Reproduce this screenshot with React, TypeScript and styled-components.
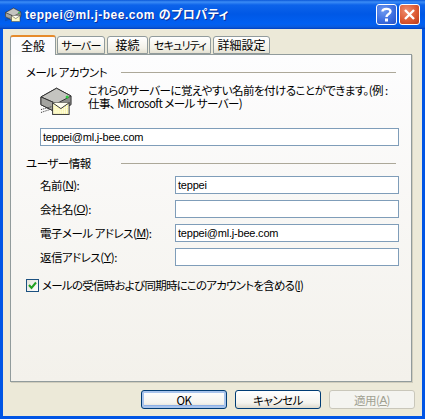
import styled, { createGlobalStyle } from "styled-components";

const GlobalStyle = createGlobalStyle`
  html, body {
    margin: 0;
    padding: 0;
    background: #ece9d8;
  }
`;

const Dialog = styled.div`
  width: 425px;
  height: 419px;
  box-sizing: border-box;
  display: flex;
  flex-direction: column;
  overflow: hidden;
  font-family: "Noto Sans CJK JP", "Liberation Sans", sans-serif;
  font-feature-settings: "palt";
  font-size: 11.5px;
  letter-spacing: -0.5px;
  line-height: 14px;
  color: #000;
  background: #0055e5;
`;

const TitleBar = styled.div`
  height: 29px;
  flex: none;
  box-sizing: border-box;
  padding: 0 5px 0 5px;
  display: flex;
  align-items: center;
  background: linear-gradient(
    180deg,
    #0a57d8 0,
    #3b8cf6 2px,
    #0d63ea 5px,
    #0058e6 14px,
    #0160f2 24px,
    #0a5bde 27px,
    #003fc0 29px
  );
`;

const TitleIcon = styled.div`
  margin-right: 3px;
  display: flex;
`;

const TitleText = styled.div`
  flex: 1;
  font-family: "Liberation Sans", "Noto Sans CJK JP", sans-serif;
  font-size: 12px;
  font-weight: 700;
  letter-spacing: 0.5px;
  color: #fff;
  text-shadow: 1px 1px 0 #0f2f9a;
  white-space: nowrap;
`;

const CaptionButton = styled.div<{ $tone: "help" | "close" }>`
  width: 21px;
  height: 21px;
  margin-left: 2px;
  box-sizing: border-box;
  border: 1px solid #fff;
  border-radius: 3px;
  display: flex;
  align-items: center;
  justify-content: center;
  background: ${(p) =>
    p.$tone === "close"
      ? "radial-gradient(circle at 35% 30%, #ef8e70 0, #dd5a33 55%, #b93a1a 100%)"
      : "radial-gradient(circle at 35% 30%, #6f9af0 0, #3d6fe0 55%, #2450c4 100%)"};
`;

const Body = styled.div`
  flex: 1;
  margin: 0 3px 3px 3px;
  box-sizing: border-box;
  padding: 5px 10px 0 7px;
  display: flex;
  flex-direction: column;
  background: #ece9d8;
`;

const TabStrip = styled.div`
  height: 20px;
  flex: none;
  display: flex;
  align-items: flex-end;
  position: relative;
  z-index: 1;
`;

const Tab = styled.div<{ $active?: boolean; $width: number; $gap?: number; $kana?: boolean }>`
  width: ${(p) => p.$width}px;
  margin-right: ${(p) => p.$gap ?? 1}px;
  height: ${(p) => (p.$active ? 20 : 18)}px;
  margin-bottom: ${(p) => (p.$active ? -1 : 0)}px;
  box-sizing: border-box;
  display: flex;
  align-items: center;
  justify-content: center;
  font-size: ${(p) => (p.$kana ? 11 : 12)}px;
  letter-spacing: ${(p) => (p.$kana ? -0.8 : 0)}px;
  border: 1px solid #919b9c;
  border-bottom: ${(p) => (p.$active ? "none" : "1px solid #919b9c")};
  border-top: ${(p) => (p.$active ? "2px solid #e68b2c" : "1px solid #919b9c")};
  border-radius: 3px 3px 0 0;
  background: ${(p) =>
    p.$active ? "#fcfcfe" : "linear-gradient(180deg, #ffffff 0%, #f3f1e8 70%, #e4e1d2 100%)"};
  white-space: nowrap;
`;

const Panel = styled.div`
  width: 402px;
  height: 328px;
  flex: none;
  box-sizing: border-box;
  border: 1px solid #919b9c;
  box-shadow: 1px 1px 0 #d0cdbd;
  padding: 10px 15px 0 15px;
  background: linear-gradient(180deg, #fdfdfe 0%, #f3f1eb 100%);
`;

const GroupHeader = styled.div<{ $top?: number }>`
  display: grid;
  grid-template-columns: 95px 1fr;
  align-items: center;
  height: 14px;
  margin-top: ${(p) => p.$top ?? 0}px;
  white-space: nowrap;
  &::after {
    content: "";
    height: 1px;
    background: #aca899;
  }
`;

const AccountRow = styled.div`
  display: flex;
  gap: 15px;
  height: 30px;
  margin: 7px 0 0 14px;
`;

const AccountIcon = styled.div`
  flex: none;
`;

const IntroText = styled.div`
  margin-top: -2px;
  line-height: 13px;
  white-space: nowrap;
  letter-spacing: -0.55px;
`;

const Field = styled.div<{ $width: number }>`
  width: ${(p) => p.$width}px;
  height: 18px;
  box-sizing: border-box;
  border: 1px solid #7f9db9;
  background: #fff;
  padding: 1px 2px;
  font-family: "Liberation Sans", sans-serif;
  font-size: 11px;
  letter-spacing: -0.2px;
  line-height: 15px;
  white-space: nowrap;
`;

const NameField = styled(Field)`
  margin: 12px 0 0 14px;
`;

const FormGrid = styled.div`
  display: grid;
  grid-template-columns: 135px 224px;
  row-gap: 6px;
  margin: 6px 0 0 14px;
`;

const RowLabel = styled.div`
  display: flex;
  align-items: center;
  white-space: pre;
  u {
    font-family: "Liberation Sans", sans-serif;
  }
`;

const CheckRow = styled.div`
  display: flex;
  align-items: center;
  gap: 3px;
  margin-top: 12px;
  white-space: nowrap;
  letter-spacing: -0.75px;
`;

const CheckBox = styled.div`
  width: 13px;
  height: 13px;
  box-sizing: border-box;
  border: 1px solid #1c5180;
  background: linear-gradient(135deg, #e4e3dc, #fff);
  display: flex;
  align-items: center;
  justify-content: center;
`;

const Footer = styled.div`
  display: flex;
  justify-content: flex-end;
  gap: 8px;
  margin: 8px -3px 0 0;
`;

const Button = styled.div<{ $variant?: "default" | "disabled" }>`
  width: 86px;
  height: 19px;
  box-sizing: border-box;
  display: flex;
  align-items: center;
  justify-content: center;
  border-radius: 3px;
  border: 1px solid ${(p) => (p.$variant === "disabled" ? "#c9c7ba" : "#003c74")};
  color: ${(p) => (p.$variant === "disabled" ? "#a1a192" : "#000")};
  background: ${(p) =>
    p.$variant === "disabled" ? "#f4f4f0" : "linear-gradient(180deg, #ffffff 0%, #f4f3ee 70%, #dcd8cc 100%)"};
  box-shadow: ${(p) =>
    p.$variant === "default" ? "inset 0 0 0 2px #a9c4ec, inset 0 -1px 0 2px #8db0e6" : "none"};
  u {
    font-family: "Liberation Sans", sans-serif;
  }
`;

const MailServerIcon = ({ size, id }: { size: number; id: string }) => (
  <svg width={size} height={size * 0.9} viewBox="0 0 34 30" style={{ display: "block" }}>
    <defs>
      <pattern id={id} width="2" height="2" patternUnits="userSpaceOnUse">
        <rect width="2" height="2" fill="#fffff0" />
        <rect width="1" height="1" fill="#f5e94a" />
      </pattern>
    </defs>
    <path d="M1 11 L17 2 L32 10 L32 19 L17 27 L1 19 Z" fill="#8c8c8a" stroke="#333" />
    <path d="M1 11 L17 2 L32 10 L17 18 Z" fill="#c4c4c0" stroke="#333" />
    <path d="M1 11 L17 18 L17 27 L1 19 Z" fill="#a4a4a0" stroke="#333" />
    <circle cx="28" cy="11" r="1.6" fill="#2ecc40" />
    <path d="M1 24 L12 21 M1 27 L10 24" stroke="#222" strokeDasharray="1 1" />
    <rect x="13" y="17" width="17" height="12" fill={`url(#${id})`} stroke="#333" />
    <path d="M13 17 L21.5 23 L30 17" fill="#fffef0" stroke="#333" />
  </svg>
);

const App = () => {
  return (
    <>
      <GlobalStyle />
      <Dialog>
        <TitleBar>
          <TitleIcon>
            <MailServerIcon size={17} id="dither-small" />
          </TitleIcon>
          <TitleText>teppei@ml.j-bee.com のプロパティ</TitleText>
          <CaptionButton $tone="help">
            <svg width="13" height="15" viewBox="0 0 13 15">
              <path
                d="M2.5 4.5 C2.5 1 10.5 1 10.5 4.5 C10.5 7 6.5 7 6.5 10"
                fill="none"
                stroke="#fff"
                strokeWidth="2.4"
              />
              <rect x="5" y="11.5" width="3" height="3" fill="#fff" />
            </svg>
          </CaptionButton>
          <CaptionButton $tone="close">
            <svg width="13" height="13" viewBox="0 0 13 13">
              <path d="M2 2 L11 11 M11 2 L2 11" stroke="#fff" strokeWidth="2.4" />
            </svg>
          </CaptionButton>
        </TitleBar>
        <Body>
          <TabStrip>
            <Tab $active $width={46}>全般</Tab>
            <Tab $kana $width={48} $gap={2}>サーバー</Tab>
            <Tab $width={41} $gap={1}>接続</Tab>
            <Tab $kana $width={62} $gap={2}>セキュリティ</Tab>
            <Tab $width={57}>詳細設定</Tab>
          </TabStrip>
          <Panel>
            <GroupHeader>メール アカウント</GroupHeader>
            <AccountRow>
              <AccountIcon>
                <MailServerIcon size={33} id="dither-large" />
              </AccountIcon>
              <IntroText>
                これらのサーバーに覚えやすい名前を付けることができます。(例 :
                <br />
                仕事、 Microsoft メール サーバー)
              </IntroText>
            </AccountRow>
            <NameField $width={359}>teppei@ml.j-bee.com</NameField>
            <GroupHeader $top={10}>ユーザー情報</GroupHeader>
            <FormGrid>
              <RowLabel>名前(<u>N</u>):</RowLabel>
              <Field $width={224}>teppei</Field>
              <RowLabel>会社名(<u>O</u>):</RowLabel>
              <Field $width={224} />
              <RowLabel>電子メール アドレス(<u>M</u>):</RowLabel>
              <Field $width={224}>teppei@ml.j-bee.com</Field>
              <RowLabel>返信アドレス(<u>Y</u>):</RowLabel>
              <Field $width={224} />
            </FormGrid>
            <CheckRow>
              <CheckBox>
                <svg width="9" height="9" viewBox="0 0 9 9">
                  <path d="M1 4 L3.5 7 L8 1.5" fill="none" stroke="#21a121" strokeWidth="2" />
                </svg>
              </CheckBox>
              <span>メールの受信時および同期時にこのアカウントを含める(<u>I</u>)</span>
            </CheckRow>
          </Panel>
          <Footer>
            <Button $variant="default">OK</Button>
            <Button>キャンセル</Button>
            <Button $variant="disabled">適用(<u>A</u>)</Button>
          </Footer>
        </Body>
      </Dialog>
    </>
  );
};

export default App;
